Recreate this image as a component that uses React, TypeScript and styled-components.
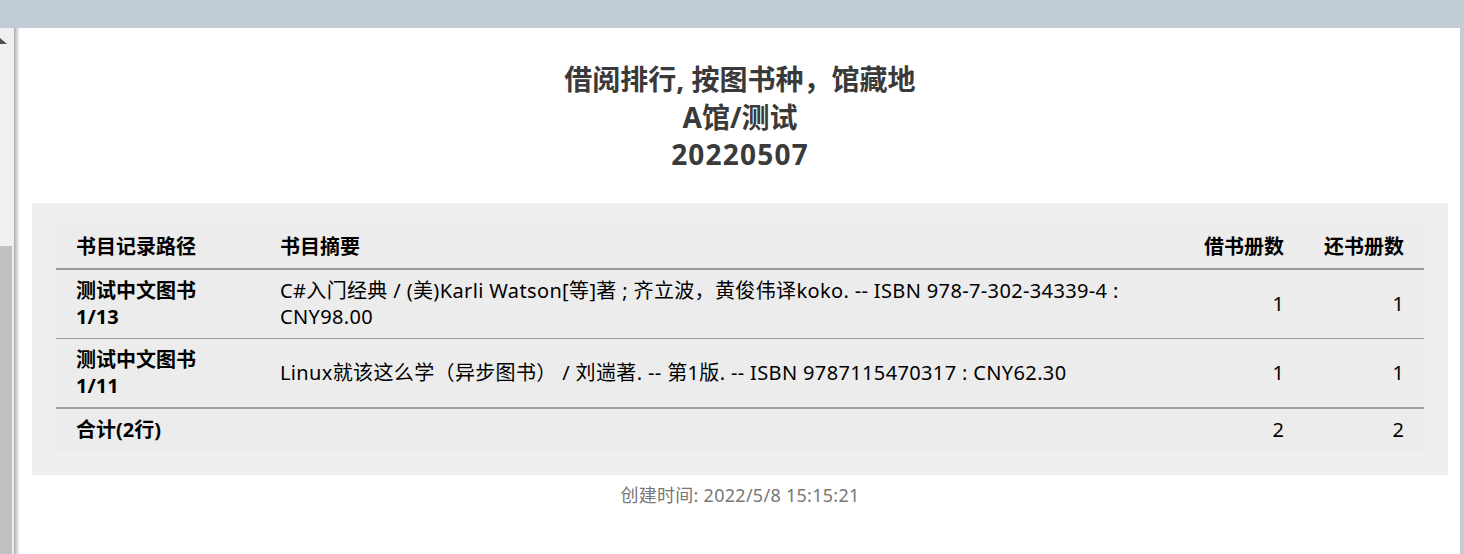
import React from "react";
import styled, { createGlobalStyle } from "styled-components";

const GlobalStyle = createGlobalStyle`
  html, body { margin: 0; padding: 0; background: #ffffff; }
  body {
    font-family: "Noto Sans", "Noto Sans CJK SC", sans-serif;
    width: 1464px;
    height: 554px;
    overflow: hidden;
  }
`;

const Frame = styled.div`
  display: flex;
  flex-direction: column;
  width: 1464px;
  height: 554px;
  overflow: hidden;
`;

const TopBar = styled.div`
  height: 28px;
  flex: none;
  background: #c2ccd6;
`;

const Body = styled.div`
  display: flex;
  flex: 1;
  min-height: 0;
`;

const ScrollStrip = styled.div`
  width: 14px;
  flex: none;
  background: #f0f0f0;
  display: flex;
  flex-direction: column;
  align-items: flex-start;
`;

const ArrowUp = styled.div`
  margin-top: 10px;
  width: 0;
  height: 0;
  border-left: 0 solid transparent;
  border-right: 7px solid transparent;
  border-bottom: 6px solid #505050;
`;

const Thumb = styled.div`
  margin-top: 202px;
  width: 12px;
  flex: 1;
  background: #c1c1c1;
`;

const Shade = styled.div`
  width: 6px;
  flex: none;
  background: linear-gradient(to right, #a3adb8, #e6eaee 70%, #ffffff);
`;

const Page = styled.div`
  flex: 1;
  background: #ffffff;
  display: flex;
  flex-direction: column;
  align-items: stretch;
  padding-top: 33px;
`;

const RightGutter = styled.div`
  width: 4px;
  flex: none;
  background: #c2ccd6;
`;

const Title = styled.h1`
  margin: 0;
  text-align: center;
  font-size: 28px;
  line-height: 37.5px;
  font-weight: 700;
  color: #3a3a3a;
`;

const Digits = styled.span`
  letter-spacing: 1.2px;
`;

const Panel = styled.div`
  margin: 29px 12px 0 12px;
  padding: 23px 24px 24px 24px;
  background: #eeeeee;
`;

const Table = styled.table`
  width: 100%;
  border-collapse: collapse;
  background: #ececec;
  font-size: 20px;
  line-height: 26px;
  color: #000000;
`;

const HeadCell = styled.th<{ $w: number; $right?: boolean }>`
  width: ${(p) => p.$w}px;
  padding: 8px 20px 8px 20px;
  text-align: ${(p) => (p.$right ? "right" : "left")};
  font-weight: 700;
  border-bottom: 2px solid #999999;
  vertical-align: middle;
  box-sizing: border-box;
`;

const Row = styled.tr<{ $last?: boolean }>`
  border-bottom: ${(p) => (p.$last ? "2px" : "1px")} solid #9e9e9e;
`;

const Cell = styled.td<{ $right?: boolean; $bold?: boolean }>`
  padding: 8px 20px;
  text-align: ${(p) => (p.$right ? "right" : "left")};
  font-weight: ${(p) => (p.$bold ? 700 : 400)};
  vertical-align: middle;
`;

const SummaryCell = styled(Cell)`
  letter-spacing: 0.36px;
`;

const Footer = styled.div`
  margin-top: 8px;
  text-align: center;
  font-size: 18px;
  line-height: 24px;
  color: #777777;
  letter-spacing: 0.28px;
`;

const rows = [
  {
    path: ["测试中文图书", "1/13"],
    summary:
      "C#入门经典 / (美)Karli Watson[等]著 ; 齐立波，黄俊伟译koko. -- ISBN 978-7-302-34339-4 : CNY98.00",
    borrow: 1,
    ret: 1,
  },
  {
    path: ["测试中文图书", "1/11"],
    summary: "Linux就该这么学（异步图书） / 刘遄著. -- 第1版. -- ISBN 9787115470317 : CNY62.30",
    borrow: 1,
    ret: 1,
  },
];

export default function App() {
  return (
    <>
      <GlobalStyle />
      <Frame>
        <TopBar />
        <Body>
          <ScrollStrip>
            <ArrowUp />
            <Thumb />
          </ScrollStrip>
          <Shade />
          <Page>
            <Title>
              借阅排行, 按图书种，馆藏地
              <br />
              A馆/测试
              <br />
              <Digits>20220507</Digits>
            </Title>
            <Panel>
              <Table>
                <thead>
                  <tr>
                    <HeadCell $w={204}>书目记录路径</HeadCell>
                    <HeadCell $w={924}>书目摘要</HeadCell>
                    <HeadCell $w={120} $right>
                      借书册数
                    </HeadCell>
                    <HeadCell $w={120} $right>
                      还书册数
                    </HeadCell>
                  </tr>
                </thead>
                <tbody>
                  {rows.map((r, i) => (
                    <Row key={i} $last={i === rows.length - 1}>
                      <Cell $bold>
                        {r.path[0]}
                        <br />
                        {r.path[1]}
                      </Cell>
                      <SummaryCell>{r.summary}</SummaryCell>
                      <Cell $right>{r.borrow}</Cell>
                      <Cell $right>{r.ret}</Cell>
                    </Row>
                  ))}
                  <tr>
                    <Cell $bold>合计(2行)</Cell>
                    <Cell />
                    <Cell $right>2</Cell>
                    <Cell $right>2</Cell>
                  </tr>
                </tbody>
              </Table>
            </Panel>
            <Footer>创建时间: 2022/5/8 15:15:21</Footer>
          </Page>
          <RightGutter />
        </Body>
      </Frame>
    </>
  );
}
